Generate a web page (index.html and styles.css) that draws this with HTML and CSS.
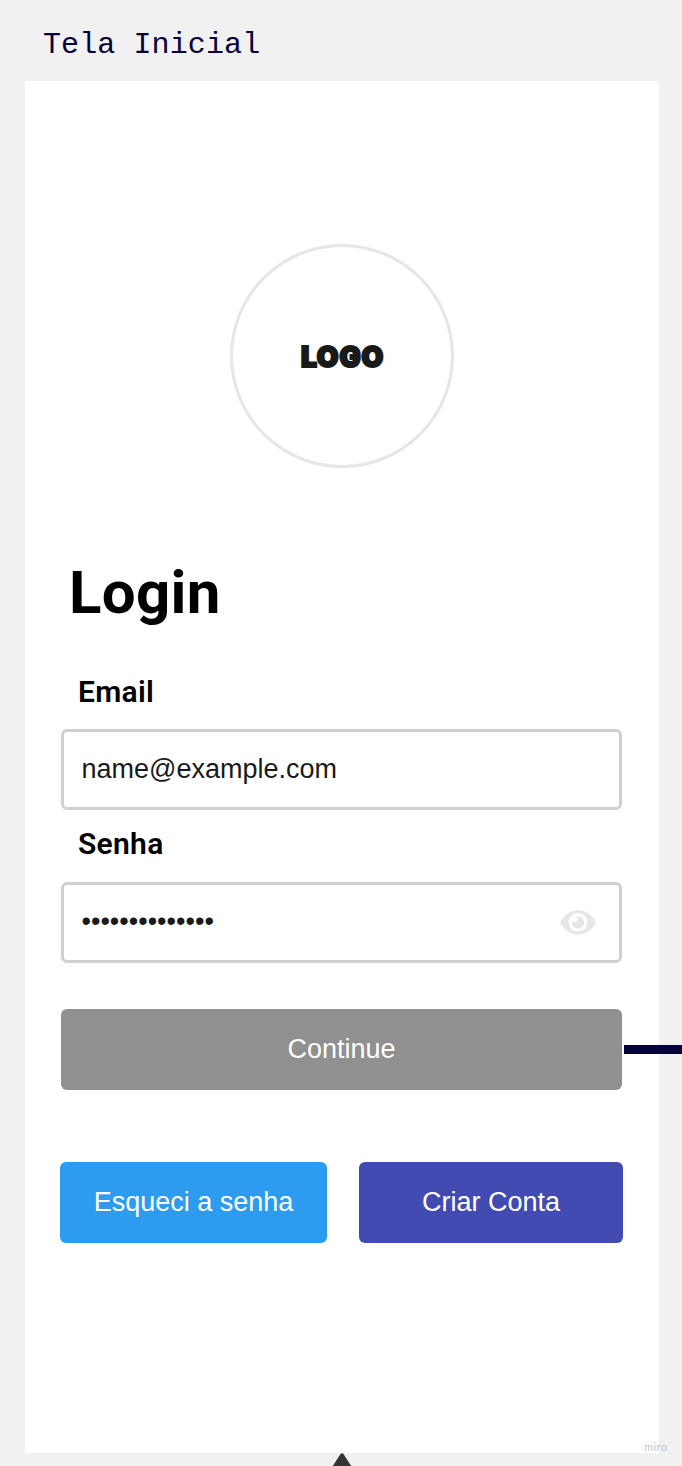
FILE: index.html
```html
<!DOCTYPE html>
<html lang="pt-BR">
<head>
<meta charset="utf-8">
<title>Tela Inicial</title>
<link rel="stylesheet" href="styles.css">
</head>
<body>
<div class="board">
  <div class="frame-title">Tela Inicial</div>
  <main class="screen">
    <div class="logo"><span class="logo-text">LOGO</span></div>
    <h1 class="heading">Login</h1>
    <div class="label">Email</div>
    <div class="field"><span class="email">name@example.com</span></div>
    <div class="label label-password">Senha</div>
    <div class="field">
      <span class="password">••••••••••••••</span>
      <svg class="eye" width="36" height="25" viewBox="0 0 36 25">
        <path fill="#e6e6e6" d="M0 12.500C4 4.500 10.500 .3 18 .3S32 4.500 36 12.500C32 20.500 25.500 24.500 18 24.500S4 20.500 0 12.500Z"/>
        <circle cx="18" cy="12.300" r="9.300" fill="#fff"/>
        <circle cx="18" cy="12.300" r="6.200" fill="#e6e6e6"/>
        <circle cx="14.800" cy="9.200" r="3" fill="#fff"/>
      </svg>
    </div>
    <div class="button button-continue">Continue</div>
    <div class="actions">
      <div class="button button-forgot">Esqueci a senha</div>
      <div class="button button-create">Criar Conta</div>
    </div>
  </main>
  <div class="connector"></div>
  <svg class="arrow" width="20" height="13" viewBox="0 0 20 13"><path fill="#333" d="M.8 13L8.200 1.500Q10-.8 11.800 1.500L19.200 13Z"/></svg>
  <div class="brand">miro</div>
</div>
</body>
</html>
```
FILE: styles.css
```css
* { box-sizing: border-box; }
body { margin: 0; background: #f1f1f1; }
.board {
  position: relative;
  width: 682px;
  height: 1466px;
  padding: 0 23px 0 25px;
  overflow: hidden;
  font-family: "Liberation Sans", Arial, sans-serif;
}
.frame-title {
  height: 81px;
  padding-left: 18px;
  font: 30px/90px "Liberation Mono", monospace;
  letter-spacing: 0.1px;
  color: #050038;
  white-space: nowrap;
}
.screen {
  height: 1372px;
  padding: 163px 37px 0 36px;
  background: #fff;
}
.logo {
  display: flex;
  align-items: center;
  justify-content: center;
  width: 224px;
  height: 224px;
  margin: 0 auto 0 169px;
  border: 3px solid #e6e6e6;
  border-radius: 50%;
}
.logo-text {
  padding: 1px 0 0 1px;
  font: 900 28px/32px Inter, sans-serif;
  letter-spacing: 0.9px;
  color: #1a1a1a;
  -webkit-text-stroke: 2.2px #1a1a1a;
}
.heading {
  height: 70px;
  margin: 90px 0 0 8px;
  font: 700 60px/70px Roboto, sans-serif;
  letter-spacing: 0.3px;
  color: #000;
}
.label {
  height: 36px;
  margin: 46px 0 19px 17px;
  font: 600 30px/36px Roboto, sans-serif;
  letter-spacing: 0.3px;
  color: #000;
}
.label-password { margin: 16px 0 20px 17px; }
.field {
  display: flex;
  align-items: center;
  justify-content: space-between;
  height: 81px;
  padding: 0 23px 0 17.5px;
  border: 3px solid #d0d0d0;
  border-radius: 6px;
  background: #fff;
  font-size: 27px;
  color: #1a1a1a;
}
.password { padding-bottom: 2px; }
.button {
  display: flex;
  align-items: center;
  justify-content: center;
  height: 81px;
  border-radius: 6px;
  font-size: 27px;
  color: #fff;
  white-space: nowrap;
}
.button-continue { margin-top: 46px; background: #909090; }
.actions {
  display: grid;
  grid-template-columns: 267px 264px;
  gap: 32px;
  margin: 72px -1px 0;
}
.button-forgot { background: #2d9bf0; }
.button-create { background: #414bb2; }
.connector {
  position: absolute;
  top: 1045px;
  left: 624px;
  width: 58px;
  height: 9px;
  background: #050038;
}
.arrow { position: absolute; top: 1453px; left: 332px; }
.brand {
  position: absolute;
  top: 1440px;
  left: 644px;
  font: 11px/14px Lato, sans-serif;
  letter-spacing: 0.4px;
  color: #c3c2cf;
}
```
